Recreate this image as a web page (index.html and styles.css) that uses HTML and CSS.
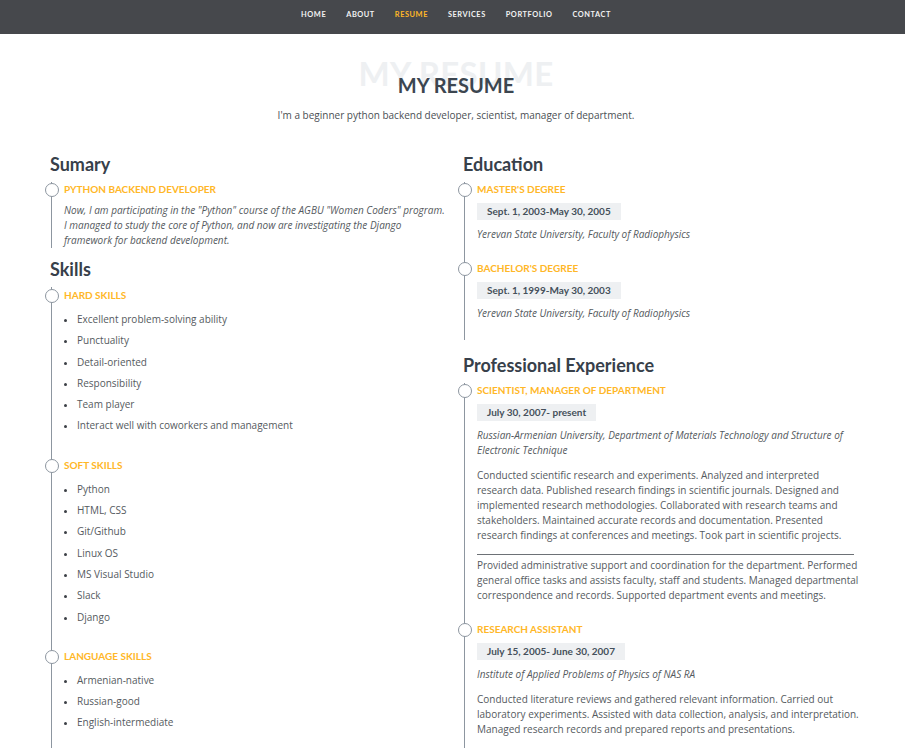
FILE: index.html
```html
<!DOCTYPE html>
<html lang="en">
<head>
<meta charset="utf-8">
<title>Resume</title>
<link rel="stylesheet" href="styles.css">
</head>
<body>
<header class="topbar">
  <nav class="nav-inner">
    <ul class="nav-menu">
      <li><a href="#">Home</a></li>
      <li><a href="#">About</a></li>
      <li><a href="#" class="active">Resume</a></li>
      <li><a href="#">Services</a></li>
      <li><a href="#">Portfolio</a></li>
      <li><a href="#">Contact</a></li>
    </ul>
  </nav>
</header>

<section class="resume">
  <div class="container">
    <div class="section-title">
      <span class="title-ghost">My Resume</span>
      <h2>My Resume</h2>
      <p>I'm a beginner python backend developer, scientist, manager of department.</p>
    </div>

    <div class="row">
      <div class="col">
        <h3 class="resume-title">Sumary</h3>
        <div class="resume-item compact">
          <h4>Python backend developer</h4>
          <p><em>Now, I am participating in the "Python" course of the AGBU "Women Coders" program. I managed to study the core of Python, and now are investigating the Django framework for backend development.</em></p>
        </div>

        <h3 class="resume-title after-compact">Skills</h3>
        <div class="resume-item list-item">
          <h4>Hard skills</h4>
          <ul>
            <li>Excellent problem-solving ability</li>
            <li>Punctuality</li>
            <li>Detail-oriented</li>
            <li>Responsibility</li>
            <li>Team player</li>
            <li>Interact well with coworkers and management</li>
          </ul>
        </div>
        <div class="resume-item list-item">
          <h4>Soft skills</h4>
          <ul>
            <li>Python</li>
            <li>HTML, CSS</li>
            <li>Git/Github</li>
            <li>Linux OS</li>
            <li>MS Visual Studio</li>
            <li>Slack</li>
            <li>Django</li>
          </ul>
        </div>
        <div class="resume-item list-item">
          <h4>Language skills</h4>
          <ul>
            <li>Armenian-native</li>
            <li>Russian-good</li>
            <li>English-intermediate</li>
          </ul>
        </div>
      </div>

      <div class="col">
        <h3 class="resume-title">Education</h3>
        <div class="resume-item">
          <h4>Master's degree</h4>
          <h5>Sept. 1, 2003-May 30, 2005</h5>
          <p><em>Yerevan State University, Faculty of Radiophysics</em></p>
        </div>
        <div class="resume-item">
          <h4>Bachelor's degree</h4>
          <h5>Sept. 1, 1999-May 30, 2003</h5>
          <p><em>Yerevan State University, Faculty of Radiophysics</em></p>
        </div>

        <h3 class="resume-title next">Professional Experience</h3>
        <div class="resume-item">
          <h4>Scientist, manager of department</h4>
          <h5>July 30, 2007- present</h5>
          <p><em>Russian-Armenian University, Department of Materials Technology and Structure of Electronic Technique</em></p>
          <p>Conducted scientific research and experiments. Analyzed and interpreted research data. Published research findings in scientific journals. Designed and implemented research methodologies. Collaborated with research teams and stakeholders. Maintained accurate records and documentation. Presented research findings at conferences and meetings. Took part in scientific projects.<span class="sep"></span>Provided administrative support and coordination for the department. Performed general office tasks and assists faculty, staff and students. Managed departmental correspondence and records. Supported department events and meetings.</p>
        </div>
        <div class="resume-item">
          <h4>Research assistant</h4>
          <h5>July 15, 2005- June 30, 2007</h5>
          <p><em>Institute of Applied Problems of Physics of NAS RA</em></p>
          <p>Conducted literature reviews and gathered relevant information. Carried out laboratory experiments. Assisted with data collection, analysis, and interpretation. Managed research records and prepared reports and presentations.</p>
        </div>
      </div>
    </div>
  </div>
</section>
</body>
</html>
```

FILE: styles.css
```css
* { box-sizing: border-box; }

html, body {
  margin: 0;
  padding: 0;
  background: #ffffff;
}

body {
  font-family: "Open Sans", "Liberation Sans", sans-serif;
  font-size: 10px;
  line-height: 15px;
  color: #555a60;
}

/* ---------- top bar ---------- */
.topbar {
  height: 34px;
  background: #46484c;
}

.nav-inner {
  width: 812px;
  margin-left: 50px;
}

.nav-menu {
  list-style: none;
  margin: 0;
  padding: 10px 0 0;
  display: flex;
  justify-content: center;
  gap: 20px;
}

.nav-menu a {
  font-family: "Lato", "Liberation Sans", sans-serif;
  font-weight: 700;
  font-size: 7.4px;
  line-height: 9px;
  letter-spacing: 0.55px;
  text-transform: uppercase;
  text-decoration: none;
  color: #f2f2f2;
  display: block;
}

.nav-menu a.active {
  color: #ffb727;
}

/* ---------- section ---------- */
.container {
  width: 812px;
  margin-left: 50px;
}

.section-title {
  position: relative;
  text-align: center;
  padding-top: 39px;
}

.title-ghost {
  position: absolute;
  left: 0;
  right: 0;
  top: 19px;
  font-family: "Lato", "Liberation Sans", sans-serif;
  font-weight: 700;
  font-size: 33px;
  line-height: 40px;
  text-transform: uppercase;
  color: #eef0f2;
  letter-spacing: 0.3px;
}

.section-title h2 {
  position: relative;
  margin: 0;
  font-family: "Lato", "Liberation Sans", sans-serif;
  font-weight: 700;
  font-size: 20px;
  line-height: 24px;
  text-transform: uppercase;
  color: #3c4650;
}

.section-title p {
  position: relative;
  margin: 11px 0 0;
  color: #4b4f54;
}

.row {
  display: grid;
  grid-template-columns: 399px 399px;
  column-gap: 14px;
  margin-top: 30px;
}

.resume-title {
  margin: 0 0 7px;
  font-family: "Lato", "Liberation Sans", sans-serif;
  font-weight: 700;
  font-size: 18px;
  line-height: 22px;
  color: #37404a;
}

.resume-title.next {
  margin-top: 14px;
}

.resume-title.after-compact {
  margin-top: 10px;
}

.resume-item {
  position: relative;
  padding: 0 0 19px 12px;
  border-left: 1.5px solid #8d96a0;
  margin-left: 1px;
}

.resume-item.compact {
  padding-bottom: 0;
}

.resume-item.list-item {
  padding-top: 1px;
  padding-bottom: 20px;
}

.resume-item::before {
  content: "";
  position: absolute;
  left: -7px;
  top: 1px;
  width: 12px;
  height: 12px;
  border-radius: 50%;
  border: 1.5px solid #8d96a0;
  background: #ffffff;
}

.resume-item.list-item::before {
  top: 2px;
}

.resume-item h4 {
  margin: 0 0 7px;
  font-family: "Lato", "Liberation Sans", sans-serif;
  font-weight: 700;
  font-size: 10px;
  line-height: 14px;
  text-transform: uppercase;
  color: #ffb727;
}

.resume-item h5 {
  display: inline-block;
  margin: 0 0 7px;
  padding: 1px 10px;
  background: #eef0f2;
  font-family: "Lato", "Liberation Sans", sans-serif;
  font-weight: 700;
  font-size: 10px;
  line-height: 15px;
  color: #45505b;
}

.resume-item p {
  margin: 0 0 10px;
}

.resume-item p:last-child {
  margin-bottom: 0;
}

.resume-item em {
  font-style: italic;
}

.sep {
  display: block;
  width: 377px;
  height: 12px;
  border-bottom: 1px solid #6d7176;
  margin-bottom: 3px;
}

.resume-item ul {
  margin: 0;
  padding-left: 13px;
  list-style: disc;
}

.resume-item li {
  line-height: 21.3px;
}

.resume-item li::marker {
  color: #3c4046;
  font-size: 9px;
}
```
